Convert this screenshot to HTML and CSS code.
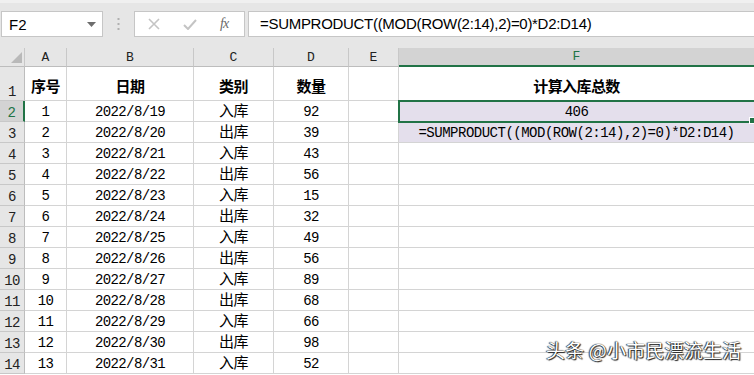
FILE: index.html
```html
<!DOCTYPE html>
<html lang="zh-CN">
<head>
  <meta charset="UTF-8">
  <title>SUMPRODUCT</title>
  <link rel="stylesheet" href="styles.css">
</head>
<body>
  <div class="topbar">
    <div class="namebox">
      <span>F2</span>
      <svg width="9" height="5" viewBox="0 0 9 5"><path d="M0 0h9L4.5 5z" fill="#6d6d6d"/></svg>
    </div>
    <div class="sep">
      <svg width="3" height="12" viewBox="0 0 3 12"><rect x="0.5" y="0" width="2" height="2" fill="#b0b0b0"/><rect x="0.5" y="5" width="2" height="2" fill="#b0b0b0"/><rect x="0.5" y="10" width="2" height="2" fill="#b0b0b0"/></svg>
    </div>
    <div class="fnbox">
      <svg class="ico" width="12" height="12" viewBox="0 0 12 12"><path d="M1 1L11 11M11 1L1 11" stroke="#c4c4c4" stroke-width="1.6"/></svg>
      <svg class="ico" width="14" height="11" viewBox="0 0 14 11"><path d="M1 6l4 4L13 1" stroke="#c4c4c4" stroke-width="2" fill="none"/></svg>
      <span class="fx">fx</span>
    </div>
    <div class="formula">=SUMPRODUCT((MOD(ROW(2:14),2)=0)*D2:D14)</div>
  </div>

  <div class="sheet">
    <div class="hd corner"><svg width="11" height="11" viewBox="0 0 11 11"><path d="M11 0V11H0z" fill="#b9b9b9"/></svg></div>
    <div class="hd">A</div><div class="hd">B</div><div class="hd">C</div><div class="hd">D</div><div class="hd">E</div><div class="hd on">F</div>

    <div class="rh low">1</div><div class="c b">序号</div><div class="c b">日期</div><div class="c b">类别</div><div class="c b">数量</div><div class="c"></div><div class="c b">计算入库总数</div>
    <div class="rh on">2</div><div class="c">1</div><div class="c">2022/8/19</div><div class="c cn">入库</div><div class="c">92</div><div class="c"></div><div class="c sel">406</div>
    <div class="rh">3</div><div class="c">2</div><div class="c">2022/8/20</div><div class="c cn">出库</div><div class="c">39</div><div class="c"></div><div class="c fill">=SUMPRODUCT((MOD(ROW(2:14),2)=0)*D2:D14)</div>
    <div class="rh">4</div><div class="c">3</div><div class="c">2022/8/21</div><div class="c cn">入库</div><div class="c">43</div><div class="c"></div><div class="c"></div>
    <div class="rh">5</div><div class="c">4</div><div class="c">2022/8/22</div><div class="c cn">出库</div><div class="c">56</div><div class="c"></div><div class="c"></div>
    <div class="rh">6</div><div class="c">5</div><div class="c">2022/8/23</div><div class="c cn">入库</div><div class="c">15</div><div class="c"></div><div class="c"></div>
    <div class="rh">7</div><div class="c">6</div><div class="c">2022/8/24</div><div class="c cn">出库</div><div class="c">32</div><div class="c"></div><div class="c"></div>
    <div class="rh">8</div><div class="c">7</div><div class="c">2022/8/25</div><div class="c cn">入库</div><div class="c">49</div><div class="c"></div><div class="c"></div>
    <div class="rh">9</div><div class="c">8</div><div class="c">2022/8/26</div><div class="c cn">出库</div><div class="c">56</div><div class="c"></div><div class="c"></div>
    <div class="rh">10</div><div class="c">9</div><div class="c">2022/8/27</div><div class="c cn">入库</div><div class="c">89</div><div class="c"></div><div class="c"></div>
    <div class="rh">11</div><div class="c">10</div><div class="c">2022/8/28</div><div class="c cn">出库</div><div class="c">68</div><div class="c"></div><div class="c"></div>
    <div class="rh">12</div><div class="c">11</div><div class="c">2022/8/29</div><div class="c cn">入库</div><div class="c">66</div><div class="c"></div><div class="c"></div>
    <div class="rh">13</div><div class="c">12</div><div class="c">2022/8/30</div><div class="c cn">出库</div><div class="c">98</div><div class="c"></div><div class="c"></div>
    <div class="rh">14</div><div class="c">13</div><div class="c">2022/8/31</div><div class="c cn">入库</div><div class="c">52</div><div class="c"></div><div class="c"></div>
  </div>

  <div class="watermark">头条 @小市民漂流生活</div>
</body>
</html>
```

FILE: styles.css
```css
* { box-sizing: border-box; }
body {
  margin: 0;
  width: 754px;
  height: 375px;
  overflow: hidden;
  background: #fff;
  color: #000;
  font-family: "Liberation Mono", "Noto Sans CJK SC", monospace;
  position: relative;
}

/* formula bar */
.topbar {
  height: 48px;
  background: #e6e6e6;
  border-top: 3px solid #f0f0f0;
  padding-top: 8px;
  display: flex;
  align-items: flex-start;
}
.namebox {
  margin-left: 1px;
  width: 102px;
  height: 26px;
  background: #fff;
  border: 1px solid #c6c6c6;
  display: flex;
  align-items: center;
  justify-content: space-between;
  padding: 0 6px 0 7px;
  font: 15px "Liberation Sans", sans-serif;
}
.sep {
  width: 31px;
  height: 26px;
  display: flex;
  align-items: center;
  justify-content: center;
}
.fnbox {
  width: 111px;
  height: 26px;
  background: #fff;
  border: 1px solid #c6c6c6;
  display: flex;
  align-items: center;
  padding-left: 13px;
  gap: 23px;
}
.fx {
  font: italic 14px "Liberation Serif", serif;
  color: #6a6a6a;
  letter-spacing: -1px;
}
.formula {
  flex: 1;
  margin-left: 3px;
  height: 26px;
  background: #fff;
  border: 1px solid #c6c6c6;
  border-right: none;
  padding-left: 11px;
  font: 15px "Liberation Sans", sans-serif;
  line-height: 24px;
  letter-spacing: -0.3px;
}

/* grid */
.sheet {
  display: grid;
  grid-template-columns: 25px 42px 127px 80px 75px 50px 356px;
  grid-template-rows: 19px 34px repeat(13, 21px);
}
.hd {
  background: #e6e6e6;
  border-right: 1px solid #c8c8c8;
  border-bottom: 1px solid #bdbdbd;
  font-size: 13px;
  display: flex;
  align-items: center;
  justify-content: center;
  color: #222;
}
.hd.corner {
  justify-content: flex-end;
  align-items: flex-end;
  padding: 0 2px 3px 0;
}
.hd.on {
  background: #d3d3d3;
  color: #217346;
  border-bottom: 2px solid #217346;
}
.rh {
  background: #e6e6e6;
  border-right: 1px solid #bdbdbd;
  border-bottom: 1px solid #c8c8c8;
  font-size: 14px;
  line-height: 1;
  padding-top: 3px;
  display: flex;
  align-items: center;
  justify-content: center;
  color: #222;
  letter-spacing: -0.6px;
}
.rh.low { align-items: flex-end; padding-bottom: 1px; }
.rh.on {
  background: #d3d3d3;
  color: #217346;
  border-right: 2px solid #217346;
}
.c {
  border-right: 1px solid #d4d4d4;
  border-bottom: 1px solid #d4d4d4;
  display: flex;
  align-items: center;
  justify-content: center;
  font-size: 14px;
  line-height: 1;
  padding-top: 2px;
  letter-spacing: -0.6px;
  white-space: nowrap;
}
.c.b {
  font: bold 15px/1 "Noto Sans CJK SC", sans-serif;
  padding-top: 3px;
}
.c.cn {
  font: 15px/1 "Noto Sans CJK SC", sans-serif;
  padding: 0 0 4px;
}
.c.fill {
  background: #e4dfec;
  letter-spacing: -0.5px;
}
.c.sel {
  background: #e4dfec;
  position: relative;
  outline: 2px solid #217346;
  outline-offset: -1px;
}
.c.sel::after {
  content: "";
  position: absolute;
  right: -2px;
  bottom: -3px;
  width: 5px;
  height: 5px;
  background: #217346;
  border: 1px solid #fff;
}

.watermark {
  position: absolute;
  left: 546px;
  top: 336px;
  font: 19px "Noto Sans CJK SC", sans-serif;
  color: #fff;
  text-shadow: 0 0 1px #000, 1px 1px 1px #222, -1px 0 1px #444;
  letter-spacing: 0.2px;
}
```
